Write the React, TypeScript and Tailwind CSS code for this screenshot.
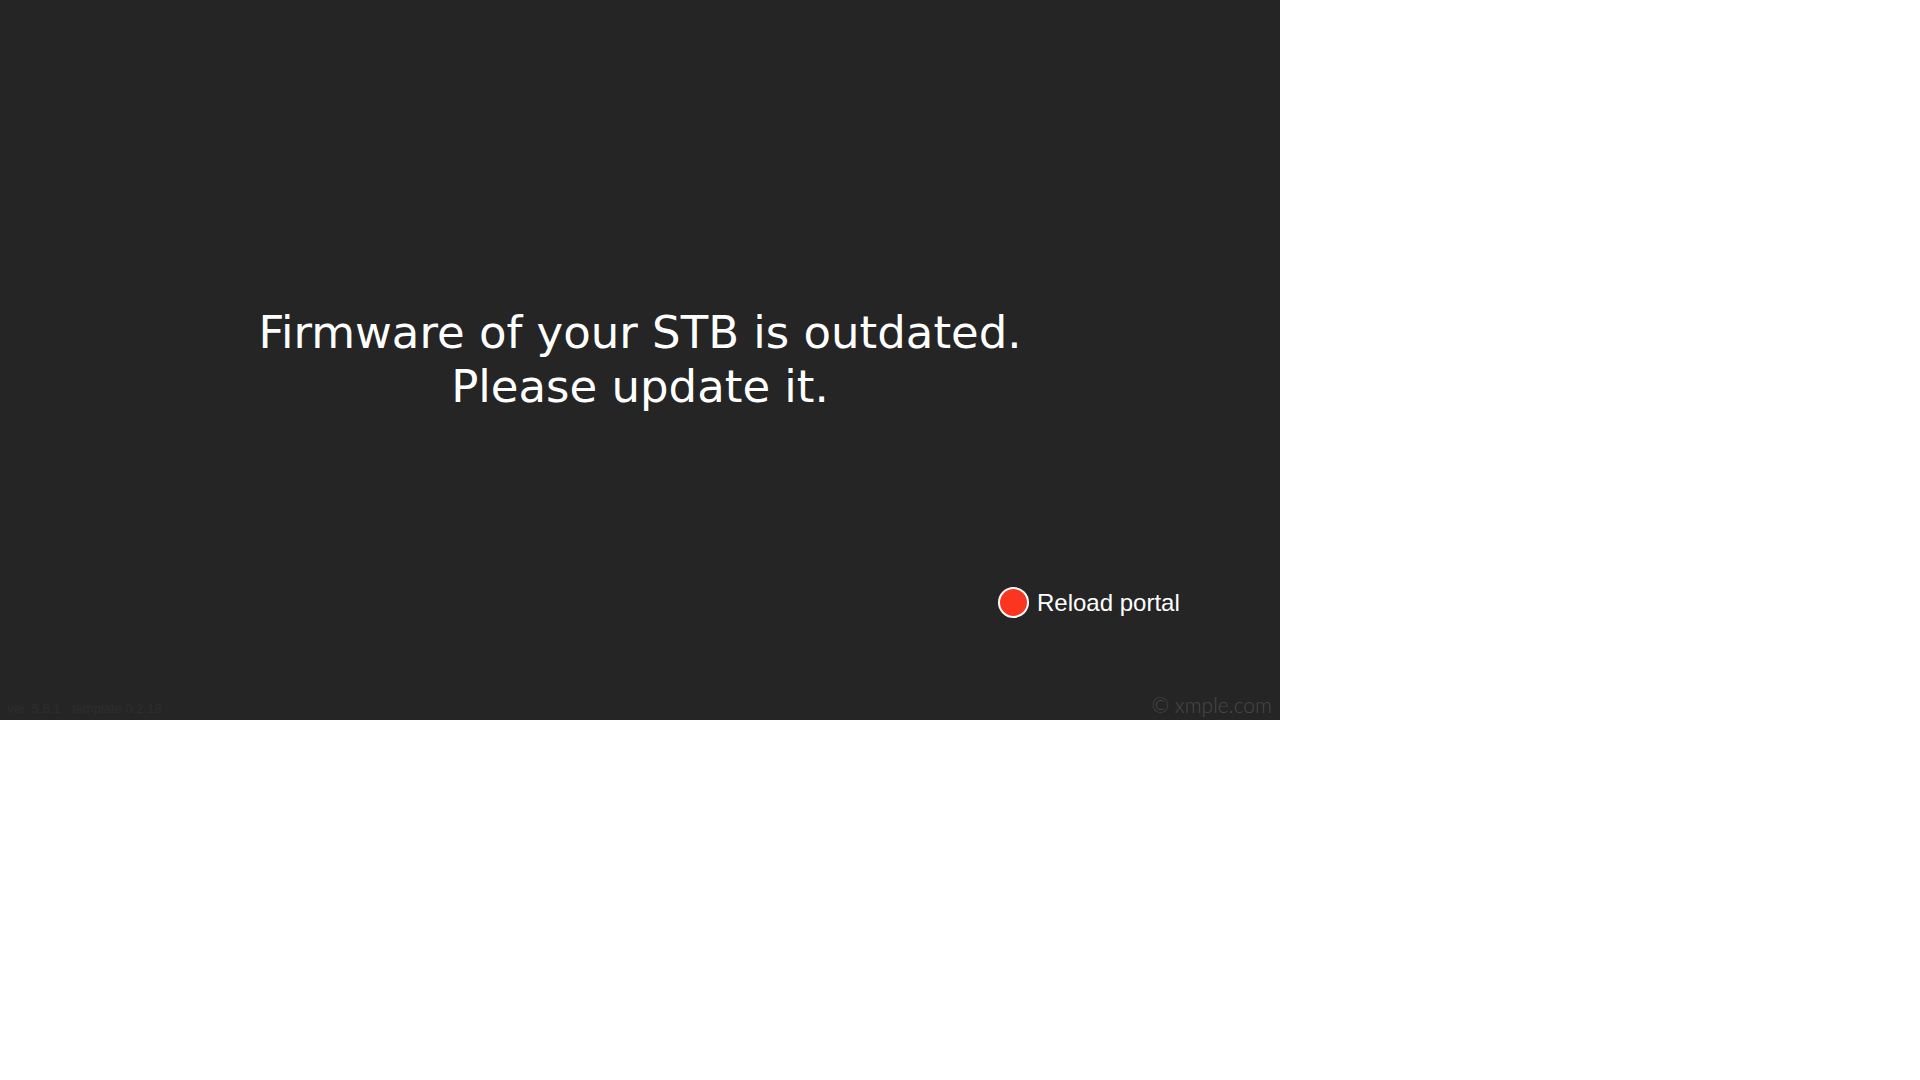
const App = () => (
  <div className="min-h-screen bg-white">
    <div className="w-[1280px] h-[720px] bg-[#252525] flex flex-col overflow-hidden">
      <div className="pt-[306px] text-center text-white text-[45px] leading-[54px] font-['DejaVu_Sans',sans-serif]">
        <p>Firmware of your STB is outdated.</p>
        <p>Please update it.</p>
      </div>

      <div className="mt-[173px] pl-[998px] flex items-center gap-2 font-['Liberation_Sans',Arial,sans-serif]">
        <span className="w-[31px] h-[31px] rounded-full bg-[#fb3520] border-2 border-white shrink-0" />
        <span className="text-white text-[24px] leading-none">Reload portal</span>
      </div>

      <div className="mt-auto flex items-end justify-between pl-[7px] pr-[8px] pb-[5px]">
        <span className="text-[13px] leading-none text-[#2d2d2d] font-['Liberation_Sans',sans-serif]">
          ver. 5.6.1 · template 0.2.18
        </span>
        <span className="text-[21px] leading-none text-[#484848] font-light font-['Lato',sans-serif]">
          © xmple.com
        </span>
      </div>
    </div>
  </div>
);

export default App;
